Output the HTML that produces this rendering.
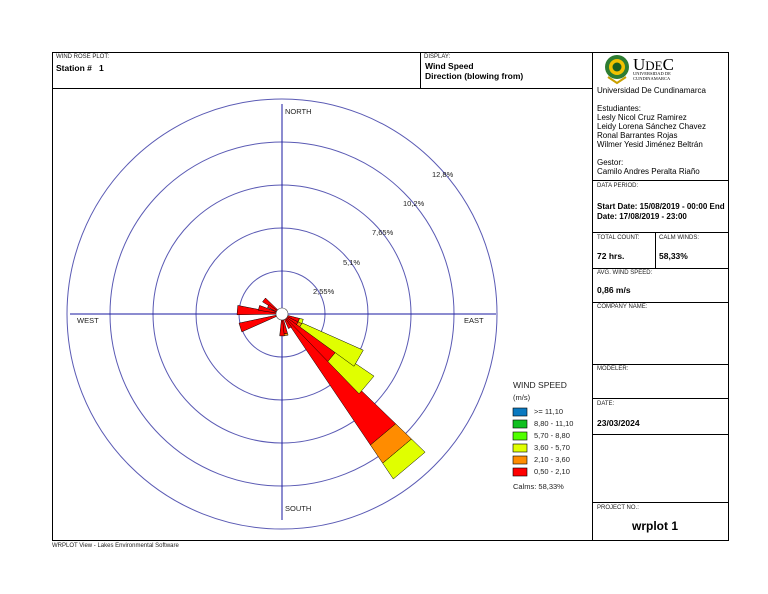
<!DOCTYPE html>
<html><head><meta charset="utf-8"><style>
body{margin:0;background:#fff;font-family:"Liberation Sans",sans-serif;}
.a{position:absolute;white-space:nowrap;color:#000}
.s{font-size:6px;color:#222}
.b{font-size:8.5px;font-weight:bold}
.t{font-size:8px}
.l{position:absolute;background:#000}
</style></head><body>
<div style="position:relative;width:768px;height:594px;overflow:hidden">
<div style="position:absolute;left:52px;top:52px;width:675px;height:487px;border:1px solid #000"></div>
<div class="l" style="left:52px;top:88px;width:540px;height:1px"></div>
<div class="l" style="left:420px;top:52px;width:1px;height:36px"></div>
<div class="l" style="left:592px;top:52px;width:1px;height:488px"></div>
<div class="l" style="left:592px;top:180px;width:136px;height:1px"></div>
<div class="l" style="left:592px;top:232px;width:136px;height:1px"></div>
<div class="l" style="left:592px;top:268px;width:136px;height:1px"></div>
<div class="l" style="left:592px;top:302px;width:136px;height:1px"></div>
<div class="l" style="left:592px;top:364px;width:136px;height:1px"></div>
<div class="l" style="left:592px;top:398px;width:136px;height:1px"></div>
<div class="l" style="left:592px;top:434px;width:136px;height:1px"></div>
<div class="l" style="left:592px;top:502px;width:136px;height:1px"></div>
<div class="l" style="left:655px;top:232px;width:1px;height:36px"></div>

<div class="a s" style="left:56px;top:54px">WIND ROSE PLOT:</div>
<div class="a b" style="left:56px;top:63px">Station #&nbsp;&nbsp;&nbsp;1</div>
<div class="a s" style="left:424px;top:54px">DISPLAY:</div>
<div class="a b" style="left:425px;top:61px;line-height:10px">Wind Speed<br>Direction (blowing from)</div>

<svg style="position:absolute;left:604px;top:53px" width="28" height="32"><circle cx="13" cy="14" r="12" fill="#2e7d32"/><circle cx="13" cy="14" r="8" fill="#f2c200"/><circle cx="13" cy="14" r="4.5" fill="#1b5e20"/><path d="M4 24 L13 30 L22 24" stroke="#c9a000" stroke-width="2" fill="none"/></svg>
<div class="a" style="left:633px;top:55px;font-family:'Liberation Serif',serif;font-size:17px">U<span style="font-size:13px">DE</span>C</div>
<div class="a" style="left:633px;top:71px;font-family:'Liberation Serif',serif;font-size:4.5px;line-height:5px">UNIVERSIDAD DE<br>CUNDINAMARCA</div>
<div class="a t" style="left:597px;top:86px;line-height:9px">Universidad De Cundinamarca<br><br>Estudiantes:<br>Lesly Nicol Cruz Ramirez<br>Leidy Lorena Sánchez Chavez<br>Ronal Barrantes Rojas<br>Wilmer Yesid Jiménez Beltrán<br><br>Gestor:<br>Camilo Andres Peralta Riaño</div>
<div class="a s" style="left:597px;top:183px">DATA PERIOD:</div>
<div class="a b" style="left:597px;top:202px;line-height:10px;font-size:8px">Start Date: 15/08/2019 - 00:00 End<br>Date: 17/08/2019 - 23:00</div>
<div class="a s" style="left:597px;top:235px">TOTAL COUNT:</div>
<div class="a b" style="left:597px;top:251px">72 hrs.</div>
<div class="a s" style="left:659px;top:235px">CALM WINDS:</div>
<div class="a b" style="left:659px;top:251px">58,33%</div>
<div class="a s" style="left:597px;top:270px">AVG. WIND SPEED:</div>
<div class="a b" style="left:597px;top:285px">0,86 m/s</div>
<div class="a s" style="left:597px;top:304px">COMPANY NAME:</div>
<div class="a s" style="left:597px;top:366px">MODELER:</div>
<div class="a s" style="left:597px;top:401px">DATE:</div>
<div class="a b" style="left:597px;top:418px">23/03/2024</div>
<div class="a s" style="left:597px;top:505px">PROJECT NO.:</div>
<div class="a" style="left:632px;top:519px;font-size:12px;font-weight:bold">wrplot 1</div>
<div class="a s" style="left:52px;top:543px">WRPLOT View - Lakes Environmental Software</div>

<svg style="position:absolute;left:0;top:0" width="768" height="594" id="r">
<g fill="none" stroke="#5a5ab4" stroke-width="1">
<circle cx="282" cy="314" r="43"/><circle cx="282" cy="314" r="86"/><circle cx="282" cy="314" r="129"/><circle cx="282" cy="314" r="172"/><circle cx="282" cy="314" r="215"/>
<line x1="70" y1="314" x2="496" y2="314" stroke="#1a1aa0"/><line x1="282" y1="104" x2="282" y2="520" stroke="#1a1aa0"/>
</g>
<g font-family="Liberation Sans" font-size="7.5" fill="#222">
<text x="285" y="114">NORTH</text><text x="464" y="323">EAST</text><text x="285" y="511">SOUTH</text><text x="77" y="323">WEST</text>
<text x="313" y="294">2,55%</text><text x="343" y="265">5,1%</text><text x="372" y="235">7,65%</text><text x="403" y="206">10,2%</text><text x="432" y="177">12,8%</text>
</g>
<g id="p" stroke="#000" stroke-width="0.5"></g>
<circle cx="282" cy="314" r="6" fill="#fff" stroke="#444" stroke-width="0.6"/>
<g font-family="Liberation Sans" font-size="7.5" fill="#222">
<text x="513" y="388" font-size="8.5">WIND SPEED</text><text x="513" y="400">(m/s)</text>
<rect x="513" y="408" width="14" height="8" fill="#0a79c0" stroke="#000" stroke-width=".6"/><text x="534" y="414">&gt;= 11,10</text>
<rect x="513" y="420" width="14" height="8" fill="#10c020" stroke="#000" stroke-width=".6"/><text x="534" y="426">8,80 - 11,10</text>
<rect x="513" y="432" width="14" height="8" fill="#50ff00" stroke="#000" stroke-width=".6"/><text x="534" y="438">5,70 - 8,80</text>
<rect x="513" y="444" width="14" height="8" fill="#e0ff00" stroke="#000" stroke-width=".6"/><text x="534" y="450">3,60 - 5,70</text>
<rect x="513" y="456" width="14" height="8" fill="#ff8c00" stroke="#000" stroke-width=".6"/><text x="534" y="462">2,10 - 3,60</text>
<rect x="513" y="468" width="14" height="8" fill="#ff0000" stroke="#000" stroke-width=".6"/><text x="534" y="474">0,50 - 2,10</text>
<text x="513" y="489">Calms: 58,33%</text>
</g>
</svg>
<script>
var C={r:"#ff0000",o:"#ff8c00",y:"#e0ff00"};
var P=[[140,[[158,"r"],[180,"o"],[199,"y"]]],[130,[[66,"r"],[111,"y"]]],[120,[[18,"r"],[22,"o"],[89,"y"]]],
[110,[[18,"r"],[22,"y"]]],[170,[[20,"r"],[22,"o"]]],[180,[[22,"r"]]],[150,[[16,"r"]]],
[275,[[45,"r"]]],[252,[[44,"r"]]],[308,[[23,"r"]]],[285,[[24,"r"]]],[300,[[16,"r"]]]];
var g=document.getElementById("p"),h="";
function pt(a,r){a=a*Math.PI/180;return (282+r*Math.sin(a)).toFixed(1)+","+(314-r*Math.cos(a)).toFixed(1);}
P.forEach(function(q){var a=q[0],w=6,r0=0;q[1].forEach(function(s){var r1=s[0];
h+='<polygon fill="'+C[s[1]]+'" points="'+pt(a-w,r0)+" "+pt(a-w,r1)+" "+pt(a+w,r1)+" "+pt(a+w,r0)+'"/>';r0=r1;});});
g.innerHTML=h;
</script>
</div>
</body></html>
